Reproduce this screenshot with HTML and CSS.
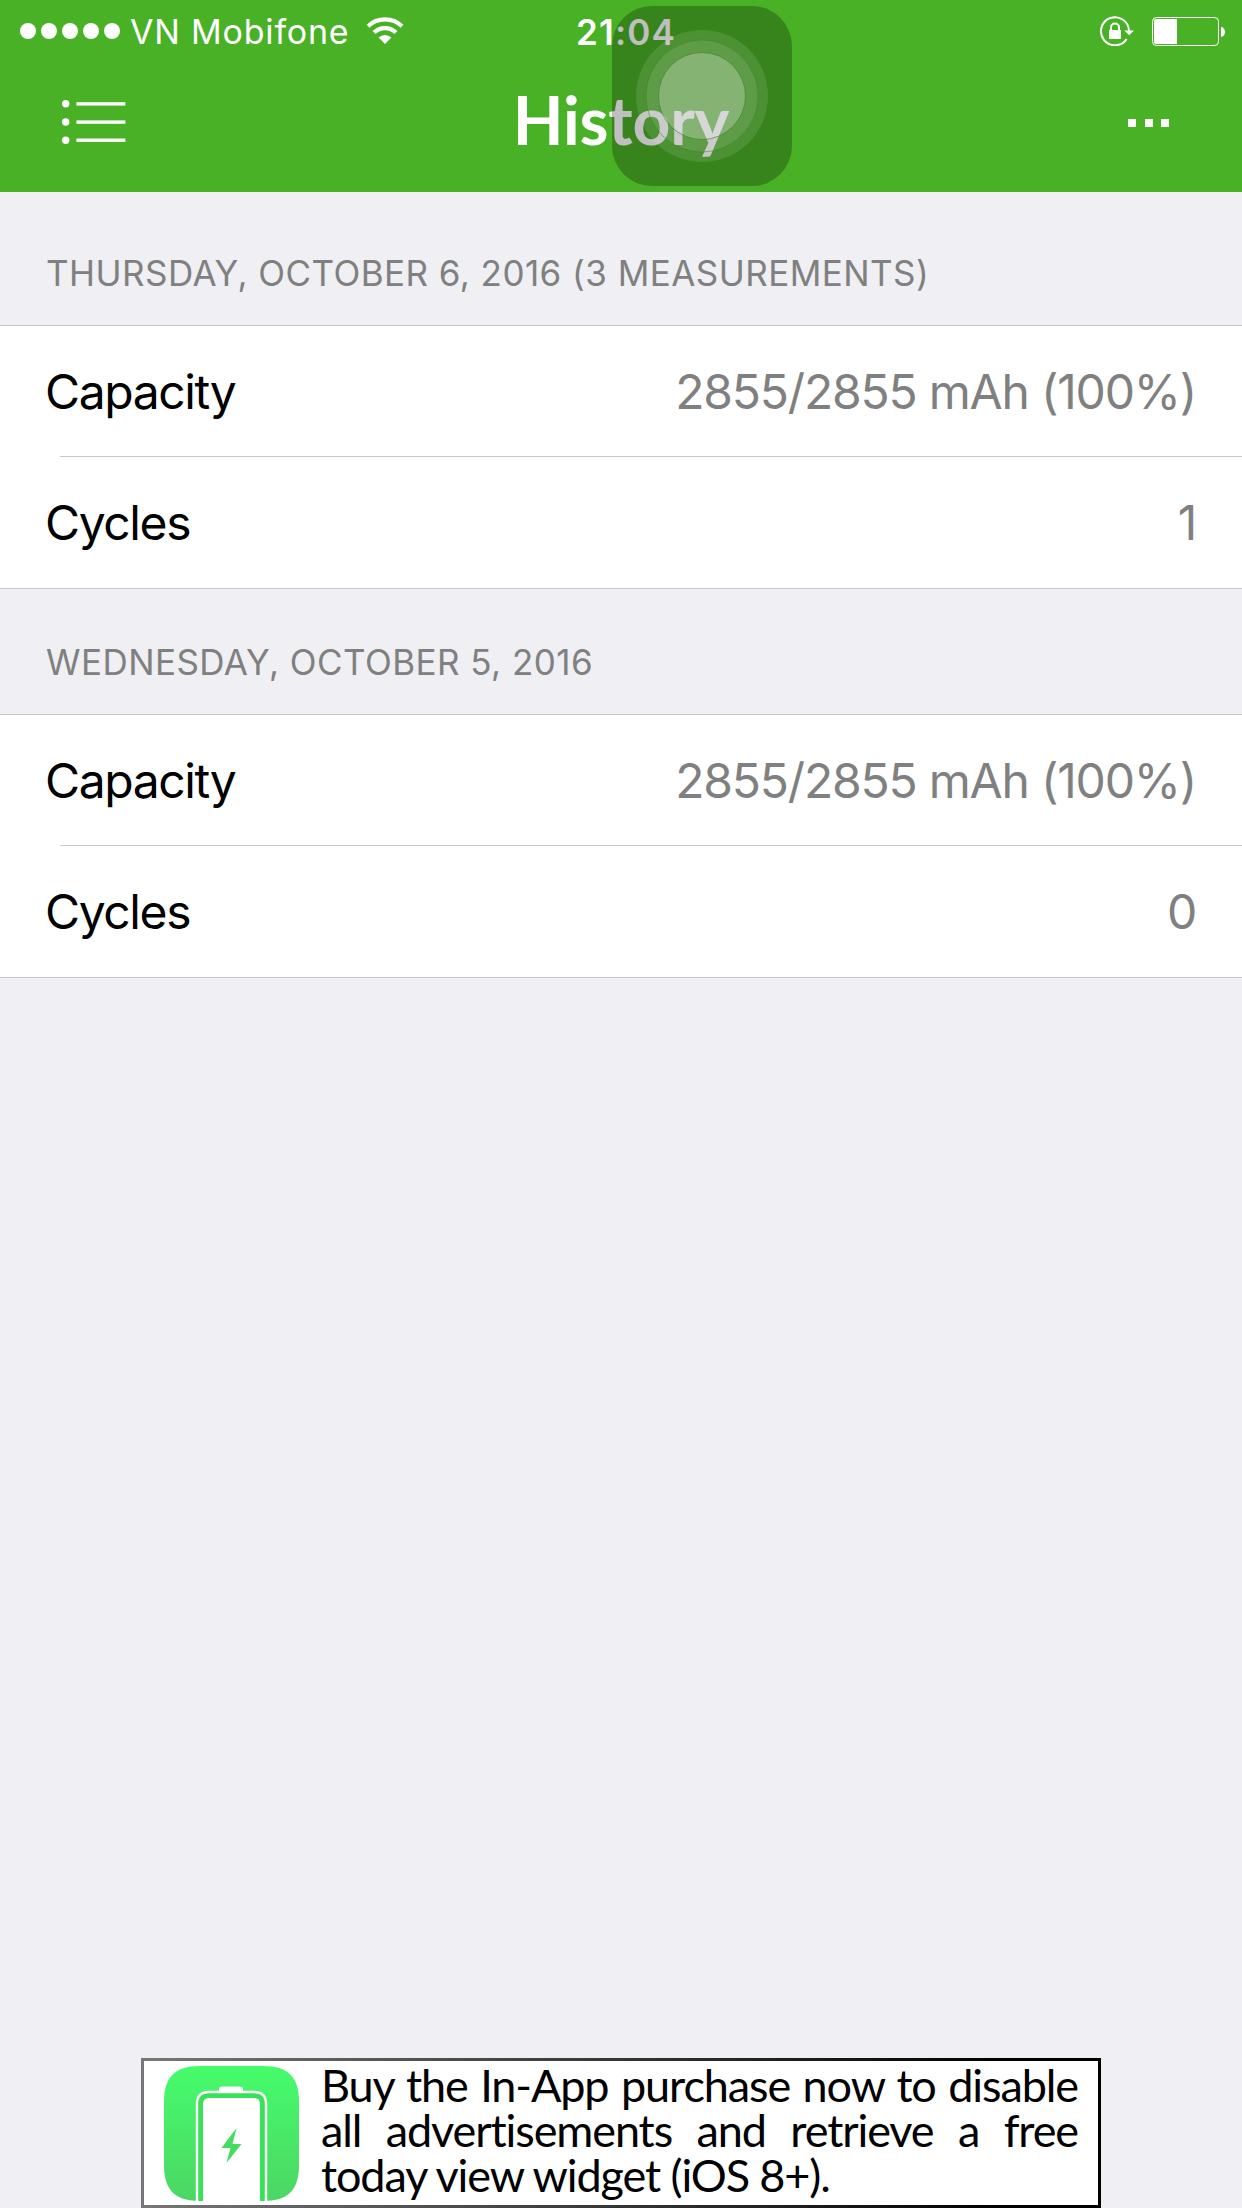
FILE: index.html
```
<!DOCTYPE html>
<html lang="en">
<head>
  <meta charset="UTF-8">
  <meta name="viewport" content="width=device-width, initial-scale=1.0">
  <title>History</title>
  <link rel="stylesheet" href="styles.css">
</head>
<body>
  <header>
    <div class="status-bar">
      <div class="status-left">
        <svg class="signal" width="100" height="16" viewBox="0 0 100 16" fill="#fff">
          <circle cx="8" cy="8" r="8"/>
          <circle cx="29" cy="8" r="8"/>
          <circle cx="50" cy="8" r="8"/>
          <circle cx="71" cy="8" r="8"/>
          <circle cx="92" cy="8" r="8"/>
        </svg>
        <span class="carrier">VN Mobifone</span>
        <svg class="wifi" width="38" height="28" viewBox="0 0 38 28">
          <g fill="none" stroke="#fff" stroke-width="4.2">
            <path d="M2 9.2A24.6 24.6 0 0 1 36 9.2"/>
            <path d="M8 15.6A15.6 15.6 0 0 1 30 15.6"/>
          </g>
          <path d="M19 27L12.6 20.6A9.2 9.2 0 0 1 25.4 20.6Z" fill="#fff"/>
        </svg>
      </div>
      <span class="time">21:04</span>
      <div class="status-right">
        <svg class="lock" width="34" height="30" viewBox="0 0 34 30">
          <path d="M26.6 23.1A14 14 0 1 1 29 15" fill="none" stroke="#fff" stroke-width="2"/>
          <path d="M24.4 14.5H34L29.2 19.3Z" fill="#fff"/>
          <path d="M11 15V11.5a4 4 0 0 1 8 0V15" fill="none" stroke="#fff" stroke-width="2"/>
          <rect x="9" y="14" width="12" height="9" fill="#fff"/>
        </svg>
        <svg class="battery" width="74" height="29" viewBox="0 0 74 29">
          <rect x=".5" y=".5" width="66" height="28" rx="4" fill="none" stroke="#fff"/>
          <path d="M4 2H25V27H4a2 2 0 0 1-2-2V4a2 2 0 0 1 2-2Z" fill="#fff"/>
          <path d="M69 10a4 5 0 0 1 0 10Z" fill="#fff"/>
        </svg>
      </div>
    </div>

    <div class="nav-bar">
      <svg class="menu" width="64" height="44" viewBox="0 0 64 44" fill="#fff">
        <circle cx="3.7" cy="3.7" r="3.7"/>
        <circle cx="3.7" cy="22" r="3.7"/>
        <circle cx="3.7" cy="40.3" r="3.7"/>
        <rect x="14.4" y="2.2" width="49" height="3.4"/>
        <rect x="14.4" y="20.4" width="49" height="3.4"/>
        <rect x="14.4" y="38.5" width="49" height="3.4"/>
      </svg>
      <h1>History</h1>
      <svg class="more" width="41" height="8" viewBox="0 0 41 8" fill="#fff">
        <rect width="8" height="8"/>
        <rect x="17" width="8" height="8"/>
        <rect x="33" width="8" height="8"/>
      </svg>
    </div>
  </header>

  <!-- AssistiveTouch button floats over the header -->
  <div class="assistive">
    <svg width="180" height="180" viewBox="0 0 180 180">
      <circle cx="90" cy="90" r="66" fill="#fff" fill-opacity=".11"/>
      <circle cx="90" cy="90" r="56" fill="#fff" fill-opacity=".1" stroke="#37841c" stroke-opacity=".5"/>
      <circle cx="90" cy="90" r="43.5" fill="#fff" fill-opacity=".24" stroke="#37841c" stroke-opacity=".6"/>
    </svg>
  </div>

  <main>
    <section>
      <h2>Thursday, October 6, 2016 (3 measurements)</h2>
      <div class="group">
        <div class="row"><span>Capacity</span><span class="value">2855/2855 mAh (100%)</span></div>
        <div class="row"><span>Cycles</span><span class="value">1</span></div>
      </div>
    </section>
    <section>
      <h2>Wednesday, October 5, 2016</h2>
      <div class="group">
        <div class="row"><span>Capacity</span><span class="value">2855/2855 mAh (100%)</span></div>
        <div class="row"><span>Cycles</span><span class="value">0</span></div>
      </div>
    </section>
  </main>

  <footer class="banner">
    <svg class="app-icon" width="135" height="135" viewBox="0 0 135 135">
      <defs>
        <linearGradient id="iconGreen" x1="0" y1="0" x2="0" y2="1">
          <stop offset="0" stop-color="#45fc6b"/>
          <stop offset="1" stop-color="#4cd664"/>
        </linearGradient>
      </defs>
      <path d="M36 0H99C124 0 135 11 135 36V99C135 124 124 135 99 135H36C11 135 0 124 0 99V36C0 11 11 0 36 0Z" fill="url(#iconGreen)"/>
      <path d="M33 135V38Q33 26 45 26H90Q102 26 102 38V135" fill="#37e256" stroke="#fff" stroke-width="2.4"/>
      <path d="M55 25.5V23Q55 20.5 58 20.5H76Q79 20.5 79 23V25.5Z" fill="#fff"/>
      <path d="M39 135V38Q39 32 45 32H90Q96 32 96 38V135Z" fill="#fff"/>
      <path d="M72.5 62L57.5 82H66.5L62.5 97L77.5 78H68.5Z" fill="#44dc60"/>
    </svg>
    <p>
      <span>Buy the In-App purchase now to disable</span>
      <span>all advertisements and retrieve a free</span>
      <span class="last">today view widget (iOS 8+).</span>
    </p>
  </footer>
</body>
</html>
```
FILE: styles.css
```
* {
  box-sizing: border-box;
}
body {
  font-family: Inter, 'Liberation Sans', sans-serif;
  background: #efeff4;
  color: #000;
  margin: 0;
  height: 2208px;
  display: flex;
  flex-direction: column;
  position: relative;
  overflow: hidden;
}
svg {
  display: block;
  flex: none;
}
header {
  background: #49b125;
  color: white;
  height: 192px;
}
.status-bar {
  height: 60px;
  padding: 0 16px 0 20px;
  display: grid;
  grid-template-columns: 1fr auto 1fr;
  align-items: center;
  line-height: 60px;
}
.status-left, .status-right {
  display: flex;
  align-items: center;
}
.carrier {
  margin-left: 10px;
  padding-top: 2px;
  font-size: 34px;
  letter-spacing: 0.8px;
}
.wifi {
  margin-left: 17px;
}
.time {
  padding: 1px 0 0 6px;
  font-size: 35px;
  font-weight: 600;
  letter-spacing: 1.2px;
}
.status-right {
  justify-content: flex-end;
}
.battery {
  margin-left: 18px;
}
.nav-bar {
  height: 132px;
  padding: 0 73px 8px 62px;
  display: grid;
  grid-template-columns: 1fr auto 1fr;
  align-items: center;
}
.nav-bar h1 {
  margin: 0;
  padding: 0 0 6px 11px;
  font-family: Lato, sans-serif;
  font-size: 66px;
  font-weight: bold;
  letter-spacing: -0.2px;
}
.more {
  justify-self: end;
  margin-top: 2px;
}
.assistive {
  position: absolute;
  left: 612px;
  top: 6px;
  width: 180px;
  height: 180px;
  border-radius: 40px;
  background: rgba(0,0,0,0.25);
}
section h2 {
  margin: 0;
  height: 125px;
  padding: 51px 46px 0;
  font-size: 35px;
  line-height: 44px;
  font-weight: normal;
  letter-spacing: 0.45px;
  text-transform: uppercase;
  color: #808080;
}
section:first-child h2 {
  height: 133px;
  padding-top: 59px;
}
.group {
  background: white;
  border-top: 1px solid #c8c7cc;
  border-bottom: 1px solid #c8c7cc;
}
.row {
  height: 131px;
  padding: 0 46px 0 45px;
  display: flex;
  justify-content: space-between;
  align-items: center;
  font-size: 48px;
  letter-spacing: -1.4px;
}
.row:first-child {
  background: linear-gradient(#c8c7cc, #c8c7cc) 60px 100% / 100% 1px no-repeat;
}
.value {
  color: #808080;
  letter-spacing: -1.2px;
}
.banner {
  width: 960px;
  height: 150px;
  margin: auto auto 0;
  padding: 5px 20px;
  display: flex;
  background: white;
  border: 3px solid;
  border-image: linear-gradient(to right, #777, #000 90%) 1;
}
.banner p {
  margin: -3px 0 0 22px;
  width: 757px;
  font-family: Lato, sans-serif;
  font-size: 45px;
  line-height: 45px;
  letter-spacing: -1.1px;
}
.banner span {
  display: block;
  text-align-last: justify;
  white-space: nowrap;
}
.banner .last {
  text-align-last: left;
}
```
